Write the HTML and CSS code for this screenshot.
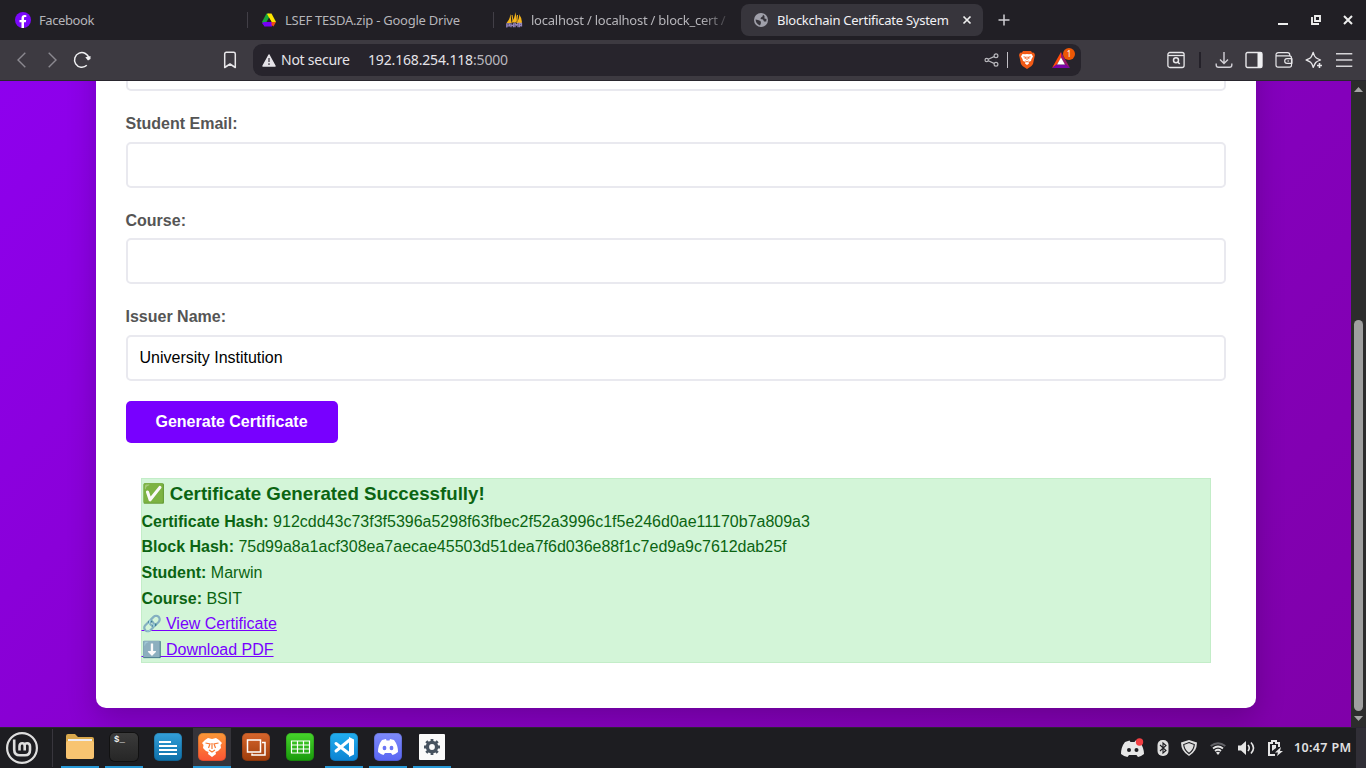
FILE: index.html
```html
<!DOCTYPE html>
<html lang="en">
<head>
<meta charset="utf-8">
<title>Blockchain Certificate System</title>
<link rel="stylesheet" href="styles.css">
</head>
<body>
<header class="tabs">
  <div class="tab tab-first">
    <svg class="fav" width="16" height="16" viewBox="0 0 16 16"><circle cx="8" cy="8" r="8" fill="#7a08fa"/><path d="M6.500 16V10.300H4.500V8H6.500V6.200C6.500 4 7.800 3 9.600 3L11.300 3.150V5.100H10.200C9.200 5.100 9 5.600 9 6.300V8H11.200L10.800 10.300H9V16Z" fill="#fff"/></svg>
    <span class="label t-fb">Facebook</span>
  </div>
  <div class="tab tab-drive">
    <svg class="fav" width="16" height="16" viewBox="0 0 16 16"><path d="M5.500 1.500H8L9.500 5 4 14.500 1 10Z" fill="#18a83b"/><path d="M7 1.500H10.500L15 10H10.500L6 2Z" fill="#fde500"/><path d="M3 10H11V14.500H3.500L1 11Z" fill="#7600f5"/><path d="M10.500 10H15L12.500 14.500 10.500 13Z" fill="#f04b16"/><path d="M8 5.500 10.500 10H5.500Z" fill="#211f25"/></svg>
    <span class="label t-drive">LSEF TESDA.zip - Google Drive</span>
  </div>
  <div class="tab tab-pma">
    <svg class="fav" width="17" height="16" viewBox="0 0 17 16"><path d="M4.500 2 5.500 11H.5Q4 7 4.500 2ZM9 0Q11.500 6 10.500 10.500H5.500Q9.500 5 9 0ZM13 2Q16.500 7 15.800 11H10.500Q14 6 13 2Z" fill="#f4b31a"/><path d="M6 3 7 9M11.500 3 11 9" stroke="#f4b31a"/><path d="M.8 15.500V11.800H3.500V13.800H1M5 11.300V15.300M7.500 11.300V15.300M5 13.300H7.500M9 15.300V11.500L10.500 13 12 11.500V15.300M13.500 15.300V11.500H15.500V14.500M13.500 13.500H15.500" fill="none" stroke="#9586bd" stroke-width="1.300"/></svg>
    <span class="label t-pma">localhost / localhost / block_cert /</span>
  </div>
  <div class="tab tab-active">
    <svg class="fav" width="14" height="14" viewBox="0 0 14 14"><circle cx="7" cy="7" r="7" fill="#a0a0aa"/><path d="M1.500 6.500 4 7 6.500 8 7 10 6 12.500Q2 11 1.500 6.500ZM7 1.500 9 1.800 8.500 3.500 7 4.500 6.500 6 9 6.500 10 8.500 12.300 8.500 12.500 6 10.500 5.500 10.500 3 9 1.800" fill="#37353c"/></svg>
    <span class="label t-block">Blockchain Certificate System</span>
    <svg class="close" width="10" height="10" viewBox="0 0 10 10"><path d="M1.500 1.500 8.500 8.500M8.500 1.500 1.500 8.500" stroke="#eee" stroke-width="1.700"/></svg>
  </div>
  <svg class="plus" width="12" height="12" viewBox="0 0 12 12"><path d="M6 .5V11.500M.5 6H11.500" stroke="#d0cfd3" stroke-width="1.500"/></svg>
  <div class="window-controls">
    <svg width="10" height="10" viewBox="0 0 10 10"><path d="M0 9H10" stroke="#eee" stroke-width="2"/></svg>
    <svg width="10" height="10" viewBox="0 0 10 10"><path d="M4 1H9V6H4ZM1 2V9H8" fill="none" stroke="#eee" stroke-width="1.900"/></svg>
    <svg width="10" height="10" viewBox="0 0 10 10"><path d="M1 1 9 9M9 1 1 9" stroke="#eee" stroke-width="2"/></svg>
  </div>
</header>
<nav class="toolbar">
  <svg class="back" width="9" height="16" viewBox="0 0 9 16"><path d="M8.300.7 1 8 8.300 15.300" fill="none" stroke="#8b8990" stroke-width="1.400"/></svg>
  <svg class="forward" width="9" height="16" viewBox="0 0 9 16"><path d="M.7.7 8 8 .7 15.300" fill="none" stroke="#8b8990" stroke-width="1.400"/></svg>
  <svg class="reload" width="18" height="18" viewBox="0 0 18 18"><path d="M13.800 14.300A7.300 7.300 0 1 1 16 7.500" fill="none" stroke="#f1f1f3" stroke-width="1.500"/><path d="M12.300 6.200 17.500 5V8L15 9.500Z" fill="#f1f1f3"/></svg>
  <svg class="bookmark" width="14" height="18" viewBox="0 0 14 18"><path d="M1.700 3Q1.700 1.300 3.400 1.300H10.600Q12.300 1.300 12.300 3V16.500L7 13 1.700 16.500Z" fill="none" stroke="#e8e7ea" stroke-width="1.500" stroke-linejoin="round"/></svg>
  <div class="address">
    <svg class="warn" width="14" height="13" viewBox="0 0 14 13"><path d="M7 1 13 12H1Z" fill="#e5e3e8" stroke="#e5e3e8" stroke-width="1.500" stroke-linejoin="round"/><path d="M7 4V8M7 9.300V11" stroke="#55525a" stroke-width="1.500"/></svg>
    <span class="secure">Not secure</span>
    <span class="url">192.168.254.118<span class="port">:5000</span></span>
    <svg class="share" width="15" height="14" viewBox="0 0 15 14"><g fill="none" stroke="#b9b8bd" stroke-width="1.200"><circle cx="2.700" cy="7" r="1.700"/><circle cx="12" cy="2.800" r="1.900"/><circle cx="12" cy="11.200" r="1.900"/><path d="M4.300 6.200 10 3.600M4.300 7.800 10 10.400"/></g></svg>
    <i class="url-divider"></i>
    <svg class="shield" width="16" height="18" viewBox="0 0 16 18"><path d="M4 0H12L13 1.500 15 1.700 16 4 15.500 6 14 13 12.500 15 8 18 3.500 15 2 13 .5 6 0 4 1 1.700 3 1.500Z" fill="#f15a16"/><path d="M3.500 3 6 3.300 8 3 10 3.300 12.500 3 14 5.500 12.500 8 12 10 9.500 11 10 12.500 8 14 6 12.500 6.500 11 4 10 3.500 8 2 5.500Z" fill="#fff"/><path d="M4.500 5.800 6.700 6.200 6 8M11.500 5.800 9.300 6.200 10 8M8 5.500V9M6.300 10 8 11 9.700 10" fill="none" stroke="#f15a16" stroke-width=".9"/></svg>
    <span class="rewards">
      <svg width="18" height="16" viewBox="0 0 18 16"><path d="M9 0 0 16 4.500 13 9 6Z" fill="#ff4b0b"/><path d="M9 0 18 16 13.500 13 9 6Z" fill="#9b166c"/><path d="M0 16 4.500 12.500H13.500L18 16Z" fill="#7a05a8"/><path d="M9 5.500 13 12.500H5Z" fill="#fff"/></svg>
      <b class="badge">1</b>
    </span>
  </div>
  <div class="tools">
    <svg width="18" height="18" viewBox="0 0 18 18"><g fill="none" stroke="#e8e7ea" stroke-width="1.300"><rect x=".9" y="1.500" width="16.200" height="15" rx="2"/><path d="M1 4.500H17"/><circle cx="9" cy="9.300" r="2.500" stroke-width="1.500"/><path d="M10.700 11 12.700 13" stroke-width="1.500"/></g></svg>
    <i class="tool-divider"></i>
    <svg class="download" width="18" height="18" viewBox="0 0 18 18"><path d="M9 1V12M5 8.500 9 12.500 13 8.500M1.200 12.500V14Q1.200 16.300 3.500 16.300H14.500Q16.800 16.300 16.800 14V12.500" fill="none" stroke="#d3d1d7" stroke-width="1.400"/></svg>
    <svg width="18" height="18" viewBox="0 0 18 18"><rect x="1" y="1.500" width="16" height="15" rx="1.500" fill="none" stroke="#e8e7ea" stroke-width="1.400"/><path d="M12.500 1.500H16Q17 1.500 17 3V15Q17 16.500 16 16.500H12.500Z" fill="#f0f0f2"/></svg>
    <svg width="18" height="18" viewBox="0 0 18 18"><path d="M1.500 4.800H14.500Q16.500 4.800 16.500 7V14Q16.500 16.200 14.500 16.200H3Q1 16.200 1 14V4Q1 1.700 3.500 1.700H12.500Q14.800 1.700 14.800 4V4.800M17 7.700V12.300H12Q9.700 12.300 9.700 10T12 7.700ZM12.500 10H14" fill="none" stroke="#e8e7ea" stroke-width="1.200" stroke-linejoin="round"/></svg>
    <svg width="18" height="18" viewBox="0 0 18 18"><path d="M8.200 1.300C9 4.200 10 6 11 6.700 12 7.500 14 8.300 15.500 9 13 10 11.500 10.600 10.800 11.500 10 12.500 9 14.800 8.200 16.400 7.400 13.500 6.500 12 5.600 11.200 4.600 10.400 2.500 9.600 1 9 3.500 8 5 7.500 5.700 6.600 6.800 5.200 7.400 3.300 8.200 1.300Z" fill="none" stroke="#e8e7ea" stroke-width="1.300" stroke-linejoin="round"/><path d="M14.500 12V17M12 14.500H17" stroke="#e8e7ea" stroke-width="1.600"/></svg>
    <svg width="18" height="18" viewBox="0 0 18 18"><path d="M1 2.700H17.300M1 9H17.300M1 15.300H17.300" stroke="#d5d4d8" stroke-width="1.600"/></svg>
  </div>
</nav>
<main class="viewport">
  <section class="page">
    <form class="card">
      <div class="group"><input class="field" type="text" aria-label="Student Name"></div>
      <div class="group"><label class="caption" for="email">Student Email:</label><input class="field" id="email" type="email"></div>
      <div class="group"><label class="caption" for="course">Course:</label><input class="field" id="course" type="text"></div>
      <div class="group"><label class="caption" for="issuer">Issuer Name:</label><input class="field" id="issuer" type="text" value="University Institution"></div>
      <button class="generate" type="button">Generate Certificate</button>
      <div class="result">
        <h3 class="result-title">✅ Certificate Generated Successfully!</h3>
        <p class="line"><strong>Certificate Hash:</strong> 912cdd43c73f3f5396a5298f63fbec2f52a3996c1f5e246d0ae11170b7a809a3</p>
        <p class="line"><strong>Block Hash:</strong> 75d99a8a1acf308ea7aecae45503d51dea7f6d036e88f1c7ed9a9c7612dab25f</p>
        <p class="line"><strong>Student:</strong> Marwin</p>
        <p class="line"><strong>Course:</strong> BSIT</p>
        <p class="line"><a class="link" href="#">🔗 View Certificate</a></p>
        <p class="line"><a class="link" href="#">⬇️ Download PDF</a></p>
      </div>
    </form>
  </section>
  <aside class="scrollbar">
    <svg width="9" height="5" viewBox="0 0 9 5"><path d="M0 5 4.500 0 9 5Z" fill="#a5a5a5"/></svg>
    <i class="thumb"></i>
    <svg width="9" height="5" viewBox="0 0 9 5"><path d="M0 0 4.500 5 9 0Z" fill="#a5a5a5"/></svg>
  </aside>
</main>
<footer class="taskbar">
  <div class="start"><svg width="32" height="32" viewBox="0 0 32 32"><circle cx="16" cy="16" r="14.900" fill="none" stroke="#dedede" stroke-width="2.200"/><path d="M8.200 7.500V17.500Q8.200 23.300 14 23.300H19Q24 23.300 24 18V14.500Q24 11.300 21.200 11.300T18.700 14V18.500M18.700 14Q18.700 11.300 16.200 11.300T13.500 14V18.500" fill="none" stroke="#dedede" stroke-width="2.600"/></svg></div>
  <div class="apps">
    <span class="app open"><svg width="28" height="28" viewBox="0 0 28 28"><path d="M0 3Q0 1 2 1H9L12 4H26Q28 4 28 6V14H0Z" fill="#d9a84c"/><path d="M2 6H26V12H2Z" fill="#eeedf0"/><path d="M0 9.500Q0 8 2 8H26Q28 8 28 9.500V24Q28 26 26 26H2Q0 26 0 24Z" fill="#f8c471"/></svg></span>
    <span class="app open"><i class="tile terminal"><span class="prompt">$<b>_</b></span></i></span>
    <span class="app"><i class="tile writer"><svg width="28" height="28" viewBox="0 0 28 28"><path d="M5 9H17M5 13H23M5 17H17M5 17H23M5 21H23" stroke="#fff" stroke-width="2"/></svg></i></span>
    <span class="app open current"><i class="tile brave"><svg width="28" height="28" viewBox="0 0 28 28"><path d="M7 7 10 5 14 6 18 5 21 7 24 10 22.500 12 23 15 20 18 17.500 19 18 21 14 24 10 21 10.500 19 8 18 5 15 5.500 12 4 10Z" fill="#fff"/><path d="M7.500 10 12 11 10.500 15M20.500 10 16 11 17.500 15M14 10V16M11 17 14 19 17 17" fill="none" stroke="#f97a33" stroke-width="1.200"/></svg></i></span>
    <span class="app"><i class="tile stack"><svg width="28" height="28" viewBox="0 0 28 28"><path d="M5.500 7H18.500V19H5.500ZM20 9.500H23V22H10V20.500" fill="none" stroke="#fff" stroke-width="1.500"/></svg></i></span>
    <span class="app"><i class="tile calc"><svg width="28" height="28" viewBox="0 0 28 28"><path d="M5.500 8H23.500V20H5.500ZM5.500 12H23.500M5.500 16H23.500M11.500 8V20M17.500 8V20" fill="none" stroke="#fff" stroke-width="1.200"/></svg></i></span>
    <span class="app open"><i class="tile code"><svg width="28" height="28" viewBox="0 0 28 28"><path d="M19.500 7 6 18M6 10.500 19.500 21" stroke="#fff" stroke-width="3" stroke-linecap="round"/><path d="M19 4 24 6.500V21.500L19 24Z" fill="#fff"/></svg></i></span>
    <span class="app open"><i class="tile discord"><svg width="28" height="28" viewBox="0 0 28 28"><path d="M8 7 12 6 12.500 7.500H15.500L16 6 20 7Q24 12 24 19 21 21.500 18.500 22L17 20H11L9.500 22Q7 21.500 4 19 4 12 8 7Z" fill="#fff"/><ellipse cx="10.500" cy="15" rx="1.900" ry="2.200" fill="#6b76f5"/><ellipse cx="17.500" cy="15" rx="1.900" ry="2.200" fill="#6b76f5"/></svg></i></span>
    <span class="app open"><i class="settings"><svg width="16" height="16" viewBox="0 0 16 16"><circle cx="8" cy="8" r="4.600" fill="none" stroke="#46525f" stroke-width="3.400"/><path d="M8 0V3M8 13V16M0 8H3M13 8H16M2.300 2.300 4.300 4.300M11.700 11.700 13.700 13.700M2.300 13.700 4.300 11.700M11.700 4.300 13.700 2.300" stroke="#46525f" stroke-width="2.800"/></svg></i></span>
  </div>
  <div class="tray">
    <svg class="tray-discord" width="24" height="20" viewBox="0 0 24 20"><path d="M4 4 8.500 2.500 9.500 4H13.500L14.500 2.500 19 4Q23 10 23 16 20 18.500 17 19L15.500 17H8L6.500 19Q3 18.500 0 16 0 9 4 4Z" fill="#e7e7e7"/><circle cx="8" cy="12" r="2" fill="#1d1d21"/><circle cx="15.500" cy="12" r="2" fill="#1d1d21"/><circle cx="18.500" cy="4" r="3.700" fill="#f13f43"/></svg>
    <svg class="bluetooth" width="12" height="16" viewBox="0 0 12 16"><rect x=".5" width="11" height="16" rx="5" fill="#dedede"/><path d="M3 5 9 10.500 6 13V3L9 5.500 3 11" fill="none" stroke="#1d1d21" stroke-width="1.100"/></svg>
    <svg class="protect" width="16" height="16" viewBox="0 0 16 16"><path d="M8 0 16 2.500Q16 11.500 8 16 0 11.500 0 2.500Z" fill="#dedede"/><path d="M8 2.500 13.300 4.500Q13 10 8 13.500 3 10 2.700 4.500Z" fill="#dedede" stroke="#1d1d21" stroke-width="1.100"/></svg>
    <svg class="wifi" width="16" height="13" viewBox="0 0 16 13"><path d="M.7 4Q8-1.500 15.300 4" fill="none" stroke="#626267" stroke-width="2"/><path d="M3 6.500Q8 2.500 13 6.500M5 9Q8 6.500 11 9" fill="none" stroke="#e5e5e5" stroke-width="1.800"/><path d="M6 10.500Q8 9 10 10.500L8 13Z" fill="#e5e5e5"/></svg>
    <svg class="volume" width="17" height="14" viewBox="0 0 17 14"><path d="M0 4.500H3L8 0V14L3 9.500H0Z" fill="#e5e5e5"/><path d="M10 4Q12.500 7 10 10M13 1.500Q18 7 13 12.500" fill="none" stroke="#e5e5e5" stroke-width="1.600"/></svg>
    <svg class="battery" width="15" height="16" viewBox="0 0 15 16"><path d="M7 15H1V3H4V1H8V3H11V7" fill="none" stroke="#e5e5e5" stroke-width="2"/><path d="M4 5H8V8L4 11ZM13 7 7 12.500H10L9 16 15 11H12Z" fill="#e5e5e5"/></svg>
    <span class="clock">10:47 PM</span>
  </div>
  <i class="corner"></i>
</footer>
</body>
</html>
```
FILE: styles.css
```css
* { box-sizing: border-box; }
body {
  margin: 0; width: 1366px; height: 768px; overflow: hidden;
  display: flex; flex-direction: column;
  font-family: "Liberation Sans", Arial, sans-serif;
}
svg { display: block; flex: none; }
i { font-style: normal; flex: none; }

.tabs {
  height: 40px; flex: none; display: flex; align-items: center;
  background: #211f25; color: #b6b5ba;
  font: 13px/20px "Noto Sans", sans-serif;
}
.tab { display: flex; align-items: center; height: 16px; flex: none; white-space: nowrap; }
.label { margin-left: 8px; }
.tab-first { width: 248px; padding-left: 15px; border-right: 1px solid #423f47; }
.tab-drive { width: 246px; padding-left: 13px; border-right: 1px solid #423f47; }
.t-fb { letter-spacing: -.4px; }
.t-drive { letter-spacing: -.24px; }
.tab-pma { width: 233px; padding-left: 12px; }
.t-pma { letter-spacing: -.24px; width: 197px; overflow: hidden; mask-image: linear-gradient(90deg, #000 170px, transparent 202px); }
.tab-active { width: 242px; height: 32px; margin-left: 14px; padding-left: 13px; border-radius: 8px; background: #37353c; color: #f2f1f4; }
.t-block { width: 172px; margin-left: 9px; letter-spacing: -.26px; }
.close { margin-left: 13px; }
.plus { margin-left: 15px; }
.window-controls { margin: 0 13px 0 auto; display: flex; gap: 22px; }
.window-controls svg:first-child { margin-right: 0; margin-left: -1px; transform: translateX(-1px); }

.toolbar {
  height: 41px; flex: none; display: flex; align-items: center;
  background: #3d3a41; border-bottom: 1px solid #29262e;
}
.back { margin-left: 17px; }
.forward { margin-left: 22px; }
.reload { margin-left: 16px; }
.bookmark { margin-left: 132px; }
.address {
  width: 828px; height: 32px; margin-left: 16px; padding: 0 10px 0 9px;
  display: flex; align-items: center; border-radius: 9px;
  background: #27242c; color: #e5e3e8;
  font: 14px/20px "Noto Sans", sans-serif; white-space: nowrap;
}
.secure { margin-left: 5px; width: 70px; letter-spacing: -.25px; }
.url { margin-left: 17px; letter-spacing: -.16px; }
.port { color: #b9b7be; }
.share { margin-left: auto; }
.url-divider { width: 1px; height: 16px; margin-left: 8px; background: #c1bfc5; }
.shield { margin-left: 11px; }
.rewards { position: relative; margin-left: 17px; display: block; }
.rewards svg { margin-right: 1px; }
.badge {
  position: absolute; left: 11px; top: -4px; width: 12px; height: 12px;
  border-radius: 50%; background: #ed5705; color: #fff;
  font-size: 8px; font-weight: 400; line-height: 12px; text-align: center;
}
.tools { display: flex; align-items: center; gap: 12px; margin: 0 13px 0 auto; }
.tool-divider { width: 2px; height: 16px; background: #242129; margin: 0 3px 0 2px; }
.download { margin-left: -1px; }

.viewport { height: 646px; flex: none; display: flex; overflow: hidden; }
.page {
  width: 1351px; height: 646px; padding: 0 95.5px 18.6px; overflow: hidden;
  display: flex; flex-direction: column; justify-content: flex-end;
  background: linear-gradient(135deg, #8e00ee 0%, #8600c4 52%, #8000a9 100%);
}
.card {
  flex: none; margin: 0; padding: 30px 30px 45px;
  border-radius: 10px; background: #fff; box-shadow: 0 10px 30px rgba(0,0,0,.2);
}
.group { margin-bottom: 20px; }
.caption { display: block; margin-bottom: 5px; color: #555; font-size: 16px; font-weight: 700; line-height: 1.6; }
.field {
  display: block; width: 100%; height: 46px; padding: 12px;
  border: 2px solid #e9e9ef; border-radius: 5px; background: #fff; color: #000;
  font: 16px "Liberation Sans", Arial, sans-serif;
}
.generate {
  display: block; height: 42px; padding: 12px 30px; border: 0; border-radius: 5px;
  background: #7800ff; color: #fff; font: 700 16px/18px "Liberation Sans", Arial, sans-serif;
}
.result {
  margin: 35px 15px 0; border: 1px solid #c3edc8; background: #d3f5d8;
  color: #0b6412; font-size: 16px; line-height: 1.6;
}
.result-title { margin: 0; font-size: 18.72px; }
.line { margin: 0; height: 25.6px; }
.link { color: #7800ff; }

.scrollbar {
  width: 15px; padding: 6px 3px; display: flex; flex-direction: column; align-items: center;
  background: #2c2c2c;
}
.thumb { width: 9px; height: 391px; margin: auto 0 5px; border-radius: 5px; background: #9f9f9f; }

.taskbar { height: 41px; flex: none; display: flex; background: #1d1d21; border-top: 1px solid #2b2731; }
.start { width: 53px; padding: 4px 0 0 6px; margin: 0 5px 0 0; background: linear-gradient(#38363d, #38363d) right center / 1px 38px no-repeat; }
.apps { display: flex; gap: 6px; padding-left: 3px; }
.app { width: 38px; height: 40px; padding-bottom: 2px; display: flex; align-items: center; justify-content: center; }
.open { box-shadow: inset 0 -2px #2799d7; }
.current { background-color: #35343a; }
.tile { width: 28px; height: 28px; border-radius: 5px; display: block; box-shadow: inset 0 0 0 1px rgba(0,0,0,.12); }
.terminal { background: linear-gradient(#3b3b3b, #262626); box-shadow: 0 0 0 1px #111; }
.prompt { display: block; padding: 1px 0 0 4px; color: #eee; font: 700 9px/12px "Liberation Mono", monospace; }
.writer { background: linear-gradient(#339fd8, #0e6fa8); }
.brave { background: linear-gradient(#fb9837, #fb5434); }
.stack { background: linear-gradient(#d7662c, #9d3c0b); }
.calc { background: linear-gradient(#46d52b, #18980b); }
.code { background: linear-gradient(#22aeee, #0b82d2); }
.discord { background: linear-gradient(#7e8bfb, #5865f2); }
.settings { width: 26px; height: 26px; padding: 5px; border-radius: 1px; background: #fafafa; }
.tray { display: flex; align-items: center; margin-left: auto; }
.bluetooth { margin-left: 12px; }
.protect { margin-left: 12px; }
.wifi { margin-left: 13px; }
.volume { margin-left: 12px; }
.battery { margin-left: 13px; }
.clock { width: 58px; margin-left: 11px; margin-right: 4px; color: #e1e1e2; font: 600 12.5px/20px "Noto Sans", sans-serif; letter-spacing: .35px; white-space: nowrap; }
.corner { width: 10px; background: #302e36; }
```
